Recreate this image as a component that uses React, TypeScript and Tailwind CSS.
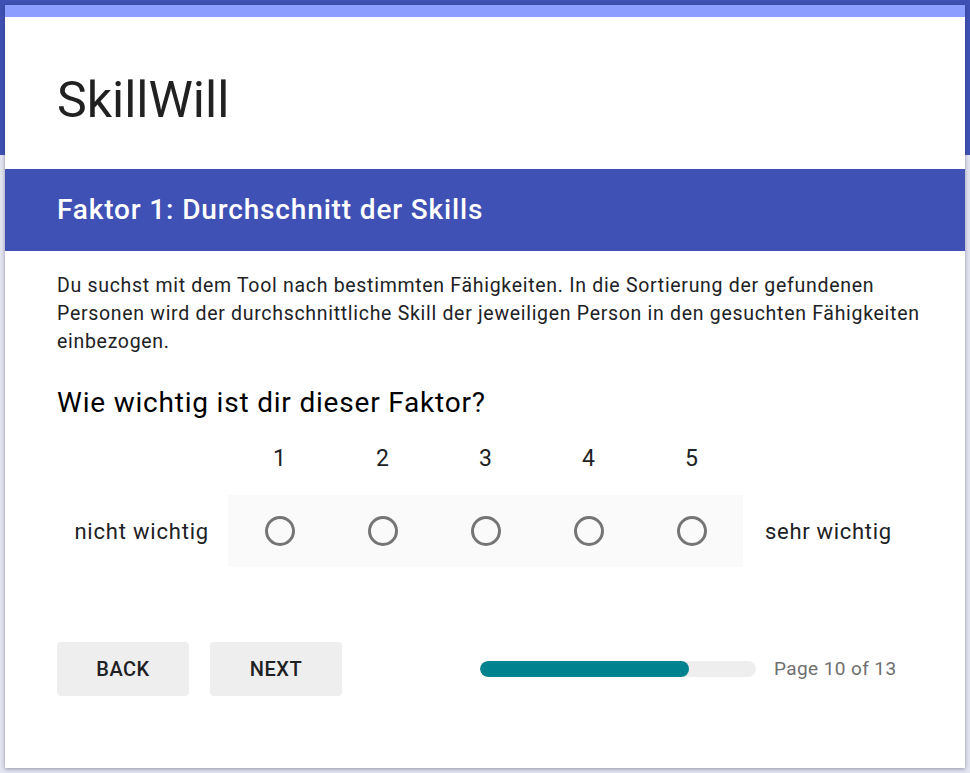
import React from 'react';

const scale = [1, 2, 3, 4, 5];

const App: React.FC = () => {
  const current = 10;
  const total = 13;
  const progress = 209 / 276;

  return (
    <div
      className="w-[970px] h-[773px] overflow-hidden bg-[linear-gradient(#3f51b5_0px,#3f51b5_155px,#e3e5f1_155px)] pt-[5px] px-[5px] text-[#202124]"
      style={{ fontFamily: 'Roboto, "Noto Sans", sans-serif' }}
    >
      <div className="w-[960px] h-[763px] bg-white shadow-[0_1px_4px_rgba(40,40,80,0.45)] flex flex-col">
        {/* Streifen oben */}
        <div className="h-[12px] bg-[#8c9eff]" />

        {/* Titel */}
        <div className="h-[152px] flex items-center pl-[52px] pt-[14px]">
          <h1 className="text-[50px] leading-none text-[#212121]">SkillWill</h1>
        </div>

        {/* Abschnitt */}
        <div className="h-[82px] bg-[#3f51b5] flex items-center pl-[52px]">
          <h2 className="text-[28px] tracking-[0.85px] font-medium text-white">Faktor 1: Durchschnitt der Skills</h2>
        </div>

        <div className="pl-[52px] pr-[40px]">
          <p className="mt-[21px] text-[19.5px] tracking-[0.7px] leading-[28px] text-[#202124]">
            Du suchst mit dem Tool nach bestimmten Fähigkeiten. In die Sortierung der gefundenen Personen wird der
            durchschnittliche Skill der jeweiligen Person in den gesuchten Fähigkeiten einbezogen.
          </p>

          <div className="mt-[31px] text-[28px] tracking-[0.8px] leading-[32px] text-[#000000]">
            Wie wichtig ist dir dieser Faktor?
          </div>

          {/* Skala */}
          <div className="mt-[20px] grid grid-cols-[171px_repeat(5,103px)_auto]">
            <div className="h-[40px]" />
            {scale.map((n) => (
              <div key={n} className="h-[40px] flex items-center justify-center text-[23px] text-[#202124]">
                {n}
              </div>
            ))}
            <div className="h-[40px]" />
          </div>
          <div className="mt-[16px] grid grid-cols-[171px_515px_auto]">
            <div className="h-[72px] flex items-center justify-end pr-[19px] text-[22px] tracking-[0.8px] text-[#202124]">
              nicht wichtig
            </div>
            <div className="h-[72px] bg-[#fafafa] grid grid-cols-5">
              {scale.map((n) => (
                <div key={n} className="flex items-center justify-center">
                  <div className="w-[30px] h-[30px] rounded-full border-[3px] border-[#757575]" />
                </div>
              ))}
            </div>
            <div className="h-[72px] flex items-center pl-[22px] text-[22px] tracking-[0.7px] text-[#202124]">
              sehr wichtig
            </div>
          </div>

          {/* Navigation */}
          <div className="mt-[75px] flex items-center">
            <button className="w-[132px] h-[54px] rounded-[4px] bg-[#eeeeee] text-[20px] tracking-[0.5px] font-medium uppercase text-[#202124]">
              Back
            </button>
            <button className="ml-[21px] w-[132px] h-[54px] rounded-[4px] bg-[#eeeeee] text-[20px] tracking-[0.5px] font-medium uppercase text-[#202124]">
              Next
            </button>
            <div className="ml-[138px] w-[276px] h-[16px] rounded-full bg-[#eeeeee] overflow-hidden">
              <div className="h-full rounded-full bg-[#00838f]" style={{ width: `${progress * 100}%` }} />
            </div>
            <div className="ml-[18px] text-[19px] tracking-[0.4px] text-[#6f6f6f]">
              Page {current} of {total}
            </div>
          </div>
        </div>
      </div>
    </div>
  );
};

export default App;
